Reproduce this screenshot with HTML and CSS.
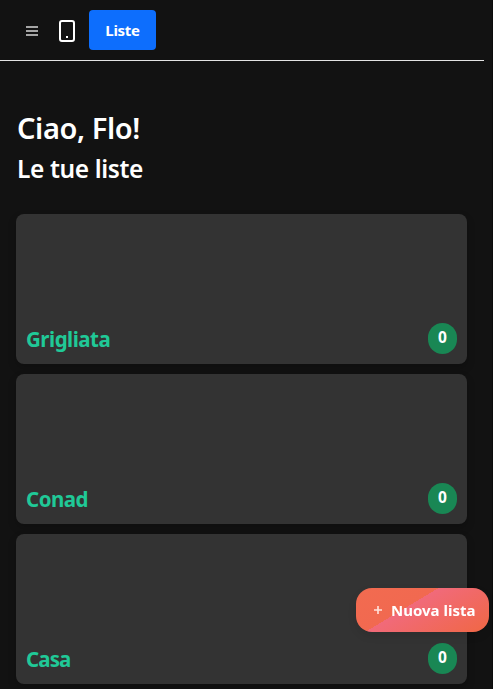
FILE: index.html
```html
<!DOCTYPE html>
<html lang="it">
<head>
<meta charset="utf-8">
<title>Liste</title>
<link rel="stylesheet" href="styles.css">
</head>
<body>
<header class="navbar">
  <svg class="menu" width="12" height="10" viewBox="0 0 12 10"><path d="M0 1h12M0 5h12M0 9h12"/></svg>
  <svg class="phone" width="16" height="22" viewBox="0 0 16 22"><rect x="1" y="1" width="14" height="20" rx="2"/><path d="M7 17h2"/></svg>
  <button class="tab">Liste</button>
</header>
<main class="content">
  <h1 class="greeting">Ciao, Flo!</h1>
  <h2 class="subtitle">Le tue liste</h2>
  <section class="lists">
    <article class="card"><h3 class="name">Grigliata</h3><span class="count">0</span></article>
    <article class="card"><h3 class="name">Conad</h3><span class="count">0</span></article>
    <article class="card"><h3 class="name casa">Casa</h3><span class="count">0</span></article>
  </section>
</main>
<button class="new-list"><svg class="plus" width="8" height="8" viewBox="0 0 8 8"><path d="M0 4h8M4 0v8"/></svg><span>Nuova lista</span></button>
</body>
</html>
```
FILE: styles.css
```css
* { box-sizing: border-box; }
html, body { height: 100%; }
body {
  margin: 0;
  overflow: hidden;
  background: #121212;
  border-right: 1px solid #0b0b0b;
  color: #fff;
  font-family: "Noto Sans", "Open Sans", sans-serif;
}
button { border: 0; color: #fff; font-family: inherit; }
svg { display: block; fill: none; flex: none; }
h1, h2, h3 { margin: 0; white-space: nowrap; }
.navbar {
  display: flex;
  align-items: center;
  width: 484px;
  height: 61px;
  padding: 0 0 0 26px;
  border-bottom: 1px solid #e4e4e4;
}
.menu { margin-top: 2px; stroke: #a5a5a5; stroke-width: 2; }
.phone { margin: 2px 14px 0 21px; stroke: #fff; stroke-width: 2; }
.tab {
  width: 67px;
  height: 40px;
  padding: 0;
  border-radius: 4px;
  background: #0d6efd;
  font-size: 15px;
  font-weight: 700;
  letter-spacing: -0.3px;
}
.content { padding: 49px 25px 0 16px; }
.greeting {
  height: 36px;
  padding-left: 1px;
  font-size: 29px;
  font-weight: 600;
  line-height: 36px;
  letter-spacing: -0.4px;
}
.subtitle {
  height: 44px;
  padding-left: 1px;
  font-size: 24.5px;
  font-weight: 600;
  line-height: 46px;
  letter-spacing: -0.38px;
}
.lists { display: grid; gap: 10px; padding-top: 24px; }
.card {
  display: flex;
  align-items: flex-end;
  justify-content: space-between;
  height: 150px;
  padding: 10px;
  border-radius: 8px;
  background: #333;
  box-shadow: 0 4px 8px rgba(0, 0, 0, 0.2);
}
.name {
  height: 30px;
  color: #20c997;
  font-size: 20.5px;
  font-weight: 700;
  line-height: 31px;
  letter-spacing: -0.5px;
}
.casa { letter-spacing: -0.9px; }
.count {
  width: 29px;
  height: 31px;
  border-radius: 15px;
  background: #198754;
  font-size: 15.5px;
  font-weight: 700;
  line-height: 29px;
  text-align: center;
}
.new-list {
  position: fixed;
  right: 4px;
  bottom: 57px;
  display: flex;
  align-items: center;
  gap: 9px;
  width: 133px;
  height: 44px;
  padding: 0 0 0 18px;
  border-radius: 16px;
  background: linear-gradient(149deg, #f26b50 0%, #f16950 40%, #f16a7a 40%, #f06744 100%);
  box-shadow: 0 4px 8px rgba(0, 0, 0, 0.1);
  font-size: 15px;
  font-weight: 700;
  letter-spacing: 0;
  white-space: nowrap;
}
.plus { stroke: #ffe3dc; stroke-width: 1.6; }
```
